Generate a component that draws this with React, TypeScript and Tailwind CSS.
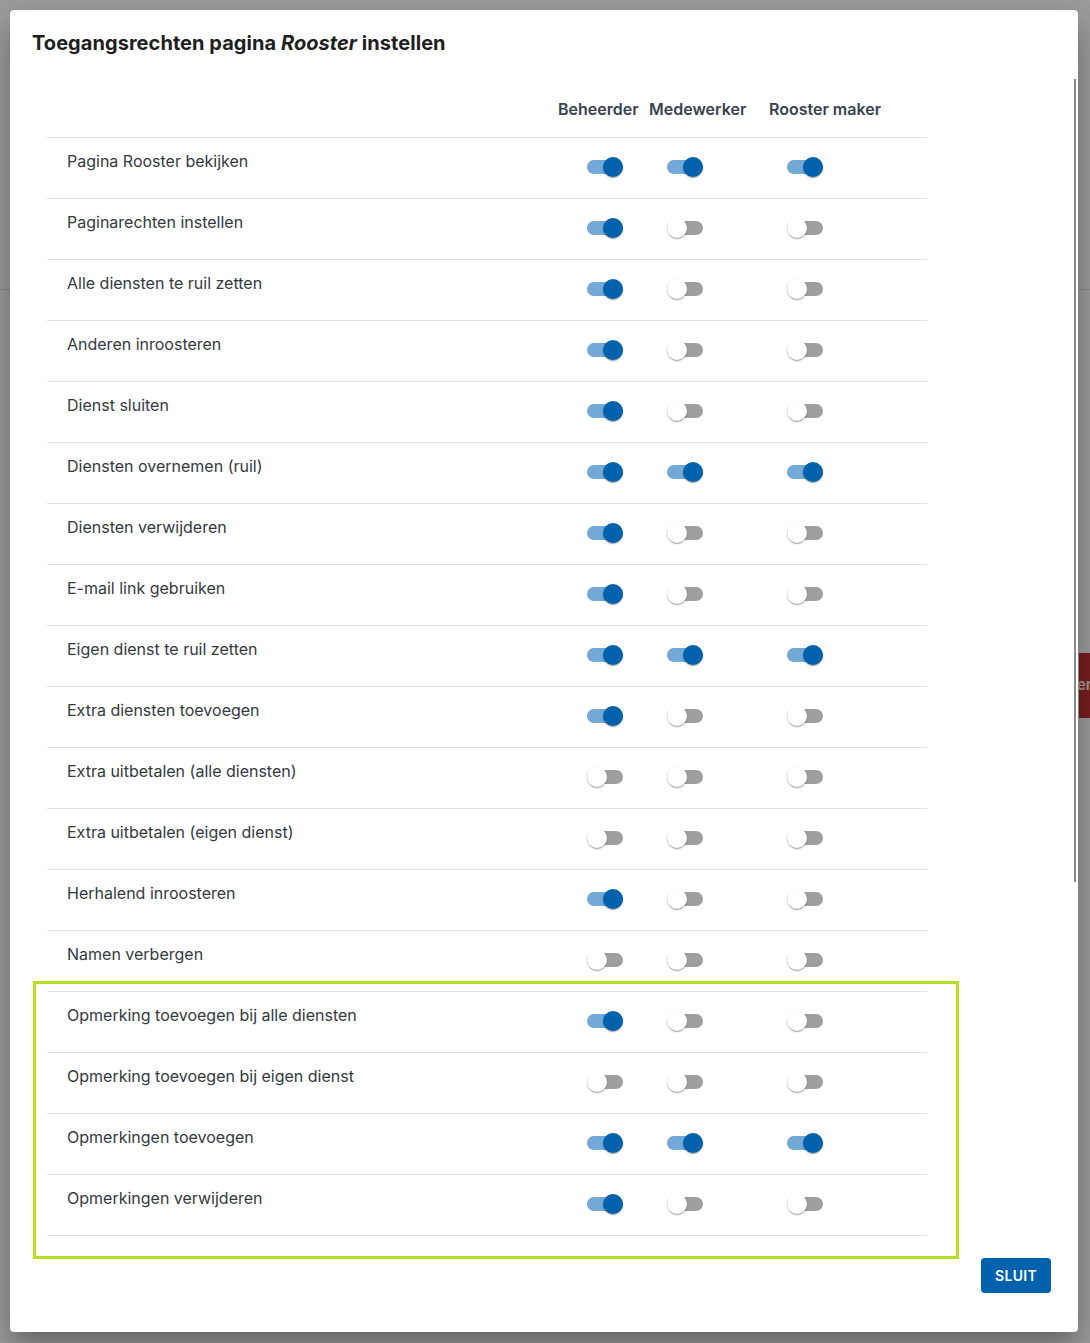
import React from "react";

const rows: [string, boolean, boolean, boolean][] = [
  ["Pagina Rooster bekijken", true, true, true],
  ["Paginarechten instellen", true, false, false],
  ["Alle diensten te ruil zetten", true, false, false],
  ["Anderen inroosteren", true, false, false],
  ["Dienst sluiten", true, false, false],
  ["Diensten overnemen (ruil)", true, true, true],
  ["Diensten verwijderen", true, false, false],
  ["E-mail link gebruiken", true, false, false],
  ["Eigen dienst te ruil zetten", true, true, true],
  ["Extra diensten toevoegen", true, false, false],
  ["Extra uitbetalen (alle diensten)", false, false, false],
  ["Extra uitbetalen (eigen dienst)", false, false, false],
  ["Herhalend inroosteren", true, false, false],
  ["Namen verbergen", false, false, false],
  ["Opmerking toevoegen bij alle diensten", true, false, false],
  ["Opmerking toevoegen bij eigen dienst", false, false, false],
  ["Opmerkingen toevoegen", true, true, true],
  ["Opmerkingen verwijderen", true, false, false],
];

function Toggle({ on }: { on: boolean }) {
  return (
    <span
      className={
        "relative inline-block w-[36px] h-[14px] rounded-full shrink-0 " +
        (on ? "bg-[#72a9d6]" : "bg-[#9e9e9e]")
      }
    >
      <span
        className={
          "absolute -top-[3px] w-[20px] h-[20px] rounded-full shadow-[0px_2px_1px_-1px_rgba(0,0,0,0.2),0px_1px_1px_0px_rgba(0,0,0,0.14),0px_1px_3px_0px_rgba(0,0,0,0.12)] " +
          (on ? "left-[16px] bg-[#0062ad]" : "left-0 bg-white")
        }
      />
    </span>
  );
}

export default function App() {
  return (
    <div className="relative w-[1090px] h-[1343px] overflow-hidden bg-white font-['Inter','Noto_Sans',sans-serif]">
      {/* background page */}
      <div className="h-[290px] border-b border-[#dfdfdf]" />
      <div className="absolute left-[1079px] top-[653px] h-[65px] w-[120px] bg-[#c53232] text-white text-[15px] font-semibold flex items-center">
        <span className="-ml-[2px]">er</span>
      </div>

      {/* backdrop */}
      <div className="absolute inset-0 bg-black/[0.38]" />

      {/* dialog */}
      <div className="absolute left-[10px] top-[10px] w-[1068px] h-[1322px] bg-white rounded-[4px] shadow-[0px_11px_15px_-7px_rgba(0,0,0,0.2),0px_24px_38px_3px_rgba(0,0,0,0.14),0px_9px_46px_8px_rgba(0,0,0,0.12)] flex flex-col">
        <h2 className="pl-[22px] pt-[17px] text-[20px] leading-[32px] font-bold text-[#1e1e1e] tracking-[0.05px]">
          Toegangsrechten pagina <em className="italic">Rooster</em> instellen
        </h2>

        <div className="ml-[37px] mt-[21px] w-[880px]">
          <div className="grid grid-cols-[505px_93px_118px_1fr] h-[58px] border-b border-[#e0e0e0] items-center text-[16px] leading-[24px] font-semibold text-[#37424f]">
            <div />
            <div className="pl-[6px] whitespace-nowrap">Beheerder</div>
            <div className="pl-[4px] whitespace-nowrap">Medewerker</div>
            <div className="pl-[6px] whitespace-nowrap">Rooster maker</div>
          </div>
          {rows.map(([label, a, b, c]) => (
            <div
              key={label}
              className="grid grid-cols-[505px_93px_118px_1fr] h-[61px] border-b border-[#e0e0e0]"
            >
              <div className="pl-[20px] pt-[11px] text-[16px] leading-[24px] text-[#333a40]">
                {label}
              </div>
              <div className="flex items-start pt-[22px] pl-[35px]">
                <Toggle on={a} />
              </div>
              <div className="flex items-start pt-[22px] pl-[22px]">
                <Toggle on={b} />
              </div>
              <div className="flex items-start pt-[22px] pl-[24px]">
                <Toggle on={c} />
              </div>
            </div>
          ))}
        </div>

        <div className="flex justify-end pr-[27px] pt-[22px]">
          <button className="w-[70px] h-[35px] rounded-[4px] bg-[#0062ad] text-white text-[14px] font-semibold tracking-[0.3px]">
            SLUIT
          </button>
        </div>

        {/* scrollbar thumb */}
        <div className="absolute left-[1064px] top-[69px] w-[2px] h-[803px] bg-[#8a8a8a]" />
      </div>

      {/* highlight annotation */}
      <div className="absolute left-[33px] top-[981px] w-[926px] h-[278px] border-[3px] border-[#b8de22]" />
    </div>
  );
}
